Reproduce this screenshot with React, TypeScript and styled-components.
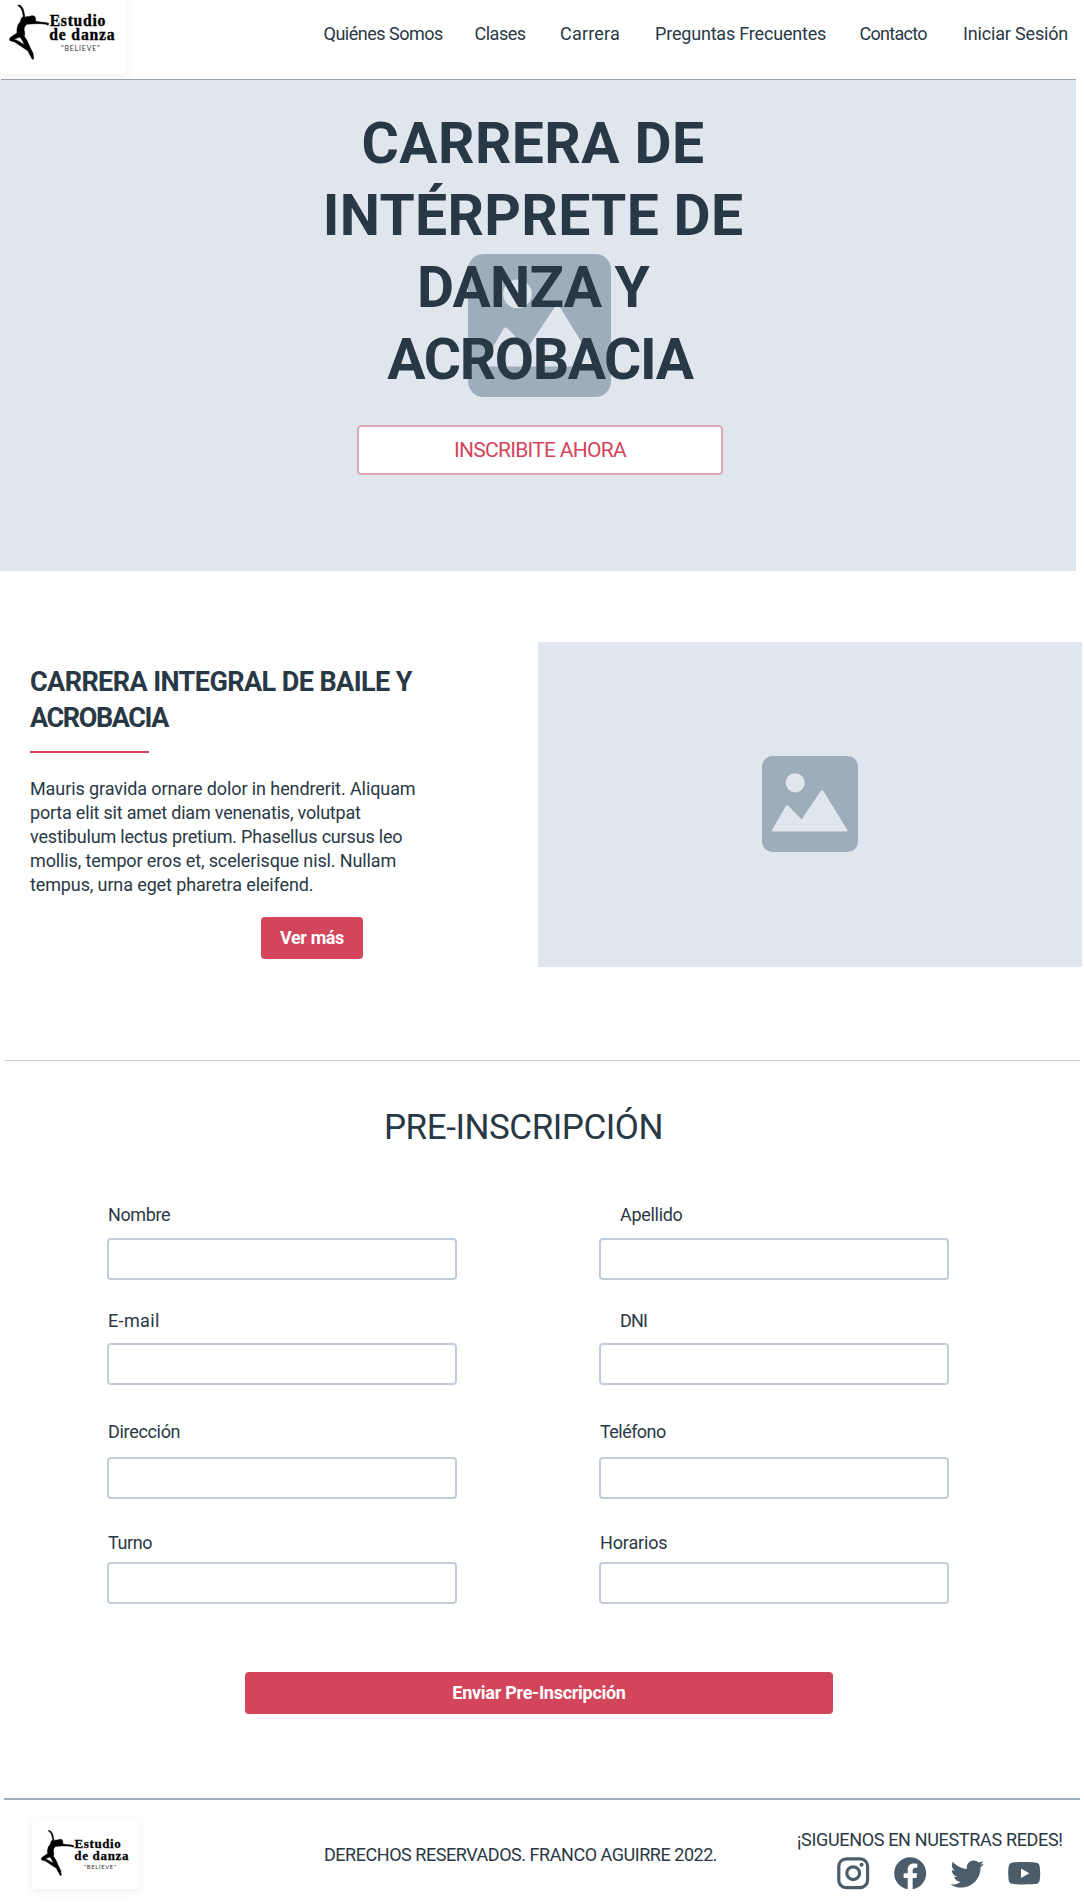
import React from "react";
import styled, { createGlobalStyle } from "styled-components";

const ink = "#293845";
const accent = "#d3455b";
const panel = "#dfe6ee";
const muted = "#9eadba";
const sans = `Roboto, "Open Sans", sans-serif`;

const GlobalStyle = createGlobalStyle`
  *, *::before, *::after { box-sizing: border-box; }
  body { margin: 0; background: #fff; color: ${ink}; font: 400 18px/24px ${sans}; }
  h1, h2, p { margin: 0; }
`;

const Page = styled.div`
  display: flex;
  flex-direction: column;
  width: 1084px;
  height: 1902px;
  overflow: hidden;
`;

/* A run of text with its own tracking */
const Run = styled.span<{ $track?: number }>`
  letter-spacing: ${(p) => p.$track ?? 0}px;
  white-space: nowrap;
`;

const Line = styled(Run)<{ $shift?: number }>`
  display: block;
  padding-left: ${(p) => p.$shift ?? 0}px;
`;

const Header = styled.header`
  display: flex;
  align-items: flex-start;
  height: 79px;
`;

const LogoCard = styled.div<{ $w: number; $h: number }>`
  flex: none;
  width: ${(p) => p.$w}px;
  height: ${(p) => p.$h}px;
  border-radius: 3px;
  background: #fff;
  box-shadow: 0 3px 10px rgba(0, 0, 0, 0.07);

  svg { display: block; width: 100%; height: 100%; }
`;

const Nav = styled.nav`
  display: grid;
  grid-template-columns: 151px 85.5px 95px 204.5px 103.5px auto;
  padding: 22px 0 0 197.5px;
`;

const NavLink = styled.a<{ $track: number }>`
  color: ${ink};
  letter-spacing: ${(p) => p.$track}px;
  white-space: nowrap;
`;

const Rule = styled.hr<{ $color: string; $thick: number; $top?: number; $left?: number; $w: number }>`
  flex: none;
  width: ${(p) => p.$w}px;
  height: ${(p) => p.$thick}px;
  margin: ${(p) => p.$top ?? 0}px 0 0 ${(p) => p.$left ?? 0}px;
  border: 0;
  background: ${(p) => p.$color};
`;

const Hero = styled.section`
  position: relative;
  flex: none;
  display: flex;
  flex-direction: column;
  align-items: center;
  width: 1076px;
  height: 491px;
  padding-top: 28px;
  background: ${panel};
`;

const HeroBackdrop = styled.div`
  position: absolute;
  inset: 0 0 0 3px;
  display: flex;
  align-items: center;
  justify-content: center;
`;

const HeroTitle = styled.h1`
  position: relative;
  margin-right: 10px;
  font-size: 57px;
  font-weight: 700;
  line-height: 72px;
  text-align: center;
`;

const HeroButton = styled.button`
  position: relative;
  width: 366px;
  height: 50px;
  margin: 29px 0 0 4px;
  padding: 0;
  border: 2px solid #dda9b6;
  border-radius: 4px;
  background: #fff;
  color: ${accent};
  font: 400 21px/24px ${sans};
`;

const Feature = styled.section`
  flex: none;
  display: grid;
  grid-template-columns: 538px 544px;
  padding-top: 71px;
`;

const Copy = styled.div`
  display: flex;
  flex-direction: column;
  align-items: flex-start;
  padding: 22px 0 0 30px;
`;

const CopyTitle = styled.h2`
  font-size: 27px;
  line-height: 36px;
`;

const CopyText = styled.p`
  margin-top: 24px;
`;

const SolidButton = styled.button<{ $w: number; $margin: string }>`
  flex: none;
  width: ${(p) => p.$w}px;
  height: 42px;
  margin: ${(p) => p.$margin};
  padding: 0;
  border: 0;
  border-radius: 4px;
  background: ${accent};
  color: #fff;
  font: 700 18px/24px ${sans};
`;

const Picture = styled.div`
  display: flex;
  align-items: center;
  justify-content: center;
  height: 325px;
  padding-bottom: 1px;
  background: ${panel};
`;

const FormTitle = styled.h2`
  margin: 46px 37px 0 0;
  font-size: 35px;
  font-weight: 400;
  line-height: 42px;
  text-align: center;
`;

const Form = styled.form`
  display: flex;
  flex-direction: column;
  margin-top: 54px;
`;

const FieldRow = styled.div<{ $top: number }>`
  display: grid;
  grid-template-columns: 350px 350px;
  column-gap: 142px;
  margin: ${(p) => p.$top}px 0 0 107px;
`;

const Field = styled.label<{ $gap: number }>`
  display: flex;
  flex-direction: column;
  gap: ${(p) => p.$gap}px;
`;

const Input = styled.input`
  width: 350px;
  height: 42px;
  border: 2px solid #c3cdd9;
  border-radius: 4px;
  background: #fff;
  outline: none;
`;

const Footer = styled.footer`
  display: grid;
  grid-template-columns: 292px 473px auto;
  align-items: start;
  padding: 18px 0 0 32px;
`;

const Copyright = styled.p`
  padding-top: 25px;
`;

const Social = styled.div`
  padding-top: 10px;
`;

const SocialIcons = styled.div`
  display: flex;
  gap: 18.6px;
  padding: 2px 0 0 37px;
`;

const SocialIcon = styled.svg`
  display: block;
  width: 38.4px;
  height: 38.4px;
  fill: #4b5c6b;
`;

const Logo = ({ viewBox }: { viewBox: string }) => (
  <svg viewBox={viewBox} preserveAspectRatio="none">
    <path
      fillRule="evenodd"
      stroke="#000"
      strokeWidth="1.6"
      strokeLinejoin="round"
      d="M53 16 L60 15 L64 19 Q71 26 72 37 L75 52 Q80 49 86 50 Q94 46 103 48 Q108 52 107 64 L120 66 L140 68 L147 71 L144 76 L139 73 L122 71 L104 71 L80 73 Q73 79 72 88 L74 99 L73 109 Q83 122 90 142 L99 160 L101 177 L97 178 L83 152 L62 138 L44 126 L30 122 Q26 117 33 111 L51 99 L51 86 Q53 72 61 65 L64 55 L70 49 L67 35 Q64 24 58 20 Z M60 111 L42 118 L53 122 L73 134 Q68 121 60 111 Z"
    />
    <g fontFamily='"Liberation Serif", serif' fontWeight="700" fontSize="47" stroke="#000" strokeWidth="1">
      <text x="149" y="77" textLength="167">Estudio</text>
      <text x="148" y="121" textLength="196">de danza</text>
    </g>
    <text x="183" y="153" textLength="116" fontFamily="Lato, sans-serif" fontSize="21" fill="#333">
      "BELIEVE"
    </text>
  </svg>
);

const ImageGlyph = ({ size }: { size: number }) => (
  <svg width={size} height={size} viewBox="0 0 96 96">
    <rect width="96" height="96" rx="10.5" fill={muted} />
    <g fill={panel}>
      <circle cx="33.2" cy="26.8" r="9.6" />
      <path d="M11 75.6 Q9.6 75.4 10.2 73.8 L23.8 50.3 Q25.2 48.4 26.8 50.2 L39.6 63.6 L58.5 35.2 Q60 33.4 61.5 35.2 L85.2 73.8 Q86 75.4 84.6 75.6 Z" />
    </g>
  </svg>
);

const nav: [string, number][] = [
  ["Quiénes Somos", -0.5],
  ["Clases", -0.5],
  ["Carrera", 0.2],
  ["Preguntas Frecuentes", -0.19],
  ["Contacto", -0.7],
  ["Iniciar Sesión", -0.17],
];

const heroLines: [string, number, number][] = [
  ["CARRERA DE", 0.4, 0],
  ["INTÉRPRETE DE", 0.32, 0],
  ["DANZA Y", -0.8, 0],
  ["ACROBACIA", -1.4, 14],
];

const paragraph: [string, number][] = [
  ["Mauris gravida ornare dolor in hendrerit. Aliquam", -0.09],
  ["porta elit sit amet diam venenatis, volutpat", -0.2],
  ["vestibulum lectus pretium. Phasellus cursus leo", -0.18],
  ["mollis, tempor eros et, scelerisque nisl. Nullam", -0.12],
  ["tempus, urna eget pharetra eleifend.", -0.12],
];

type FieldSpec = { label: string; track: number; indent: number };
const rows: { top: number; gap: number; fields: FieldSpec[] }[] = [
  { top: 0, gap: 11, fields: [{ label: "Nombre", track: -0.39, indent: 1 }, { label: "Apellido", track: -0.3, indent: 21 }] },
  { top: 29, gap: 10, fields: [{ label: "E-mail", track: 0.35, indent: 1 }, { label: "DNI", track: -0.8, indent: 21 }] },
  { top: 35, gap: 13, fields: [{ label: "Dirección", track: -0.32, indent: 1 }, { label: "Teléfono", track: -0.55, indent: 1 }] },
  { top: 32, gap: 7, fields: [{ label: "Turno", track: -0.4, indent: 1 }, { label: "Horarios", track: -0.15, indent: 1 }] },
];

const socials: [string, string][] = [
  ["Instagram", "M7.8,2H16.2C19.4,2 22,4.6 22,7.8V16.2A5.8,5.8 0 0,1 16.2,22H7.8C4.6,22 2,19.4 2,16.2V7.8A5.8,5.8 0 0,1 7.8,2M7.6,4A3.6,3.6 0 0,0 4,7.6V16.4C4,18.39 5.61,20 7.6,20H16.4A3.6,3.6 0 0,0 20,16.4V7.6C20,5.61 18.39,4 16.4,4H7.6M17.25,5.5A1.25,1.25 0 0,1 18.5,6.75A1.25,1.25 0 0,1 17.25,8A1.25,1.25 0 0,1 16,6.75A1.25,1.25 0 0,1 17.25,5.5M12,7A5,5 0 0,1 17,12A5,5 0 0,1 12,17A5,5 0 0,1 7,12A5,5 0 0,1 12,7M12,9A3,3 0 0,0 9,12A3,3 0 0,0 12,15A3,3 0 0,0 15,12A3,3 0 0,0 12,9Z"],
  ["Facebook", "M12 2.04C6.5 2.04 2 6.53 2 12.06C2 17.06 5.66 21.21 10.44 21.96V14.96H7.9V12.06H10.44V9.85C10.44 7.34 11.93 5.96 14.22 5.96C15.31 5.96 16.45 6.15 16.45 6.15V8.62H15.19C13.95 8.62 13.56 9.39 13.56 10.18V12.06H16.34L15.89 14.96H13.56V21.96A10 10 0 0 0 22 12.06C22 6.53 17.5 2.04 12 2.04Z"],
  ["Twitter", "M22.46,6C21.69,6.35 20.86,6.58 20,6.69C20.88,6.16 21.56,5.32 21.88,4.31C21.05,4.81 20.13,5.16 19.16,5.36C18.37,4.5 17.26,4 16,4C13.65,4 11.73,5.92 11.73,8.29C11.73,8.63 11.77,8.96 11.84,9.27C8.28,9.09 5.11,7.38 3,4.79C2.63,5.42 2.42,6.16 2.42,6.94C2.42,8.43 3.17,9.75 4.33,10.5C3.62,10.5 2.96,10.3 2.38,10V10.03C2.38,12.11 3.86,13.85 5.82,14.24C5.46,14.34 5.08,14.39 4.69,14.39C4.42,14.39 4.15,14.36 3.89,14.31C4.43,16 6,17.26 7.89,17.29C6.43,18.45 4.58,19.13 2.56,19.13C2.22,19.13 1.88,19.11 1.54,19.07C3.44,20.29 5.7,21 8.12,21C16,21 20.33,14.46 20.33,8.79C20.33,8.6 20.33,8.42 20.32,8.23C21.16,7.63 21.88,6.87 22.46,6Z"],
  ["YouTube", "M10,15L15.19,12L10,9V15M21.56,7.17C21.69,7.64 21.78,8.27 21.84,9.07C21.91,9.87 21.94,10.56 21.94,11.16L22,12C22,14.19 21.84,15.8 21.56,16.83C21.31,17.73 20.73,18.31 19.83,18.56C19.36,18.69 18.5,18.78 17.18,18.84C15.88,18.91 14.69,18.94 13.59,18.94L12,19C7.81,19 5.2,18.84 4.17,18.56C3.27,18.31 2.69,17.73 2.44,16.83C2.31,16.36 2.22,15.73 2.16,14.93C2.09,14.13 2.06,13.44 2.06,12.84L2,12C2,9.81 2.16,8.2 2.44,7.17C2.69,6.27 3.27,5.69 4.17,5.44C4.64,5.31 5.5,5.22 6.82,5.16C8.12,5.09 9.31,5.06 10.41,5.06L12,5C16.19,5 18.8,5.16 19.83,5.44C20.73,5.69 21.31,6.27 21.56,7.17Z"],
];

export default function App() {
  return (
    <>
      <GlobalStyle />
      <Page>
        <Header>
          <LogoCard $w={126} $h={74}>
            <Logo viewBox="0 0 378 222" />
          </LogoCard>
          <Nav>
            {nav.map(([text, track]) => (
              <NavLink key={text} $track={track}>{text}</NavLink>
            ))}
          </Nav>
        </Header>
        <Rule $color="#98a5b1" $thick={1} $left={1} $w={1075} />

        <Hero>
          <HeroBackdrop>
            <ImageGlyph size={143} />
          </HeroBackdrop>
          <HeroTitle>
            {heroLines.map(([text, track, shift]) => (
              <Line key={text} $track={track} $shift={shift}>{text}</Line>
            ))}
          </HeroTitle>
          <HeroButton>
            <Run $track={-0.7}>INSCRIBITE AHORA</Run>
          </HeroButton>
        </Hero>

        <Feature>
          <Copy>
            <CopyTitle>
              <Line $track={-0.57}>CARRERA INTEGRAL DE BAILE Y</Line>
              <Line $track={-1.4}>ACROBACIA</Line>
            </CopyTitle>
            <Rule $color={accent} $thick={2} $top={15} $w={119} />
            <CopyText>
              {paragraph.map(([text, track]) => (
                <Line key={text} $track={track}>{text}</Line>
              ))}
            </CopyText>
            <SolidButton $w={102} $margin="20px 0 0 231px">
              <Run $track={-0.4}>Ver más</Run>
            </SolidButton>
          </Copy>
          <Picture>
            <ImageGlyph size={96} />
          </Picture>
        </Feature>

        <Rule $color="#c0cfda" $thick={1} $top={93} $left={4} $w={1076} />

        <FormTitle>
          <Run $track={-0.45}>PRE-INSCRIPCIÓN</Run>
        </FormTitle>
        <Form>
          {rows.map((row) => (
            <FieldRow key={row.fields[0].label} $top={row.top}>
              {row.fields.map((f) => (
                <Field key={f.label} $gap={row.gap}>
                  <Line $track={f.track} $shift={f.indent}>{f.label}</Line>
                  <Input />
                </Field>
              ))}
            </FieldRow>
          ))}
          <SolidButton type="button" $w={588} $margin="68px 0 0 245px">
            <Run $track={-0.28}>Enviar Pre-Inscripción</Run>
          </SolidButton>
        </Form>

        <Rule $color={muted} $thick={2} $top={84} $left={4} $w={1076} />
        <Footer>
          <LogoCard $w={107} $h={71}>
            <Logo viewBox="-5 -30 387 257" />
          </LogoCard>
          <Copyright>
            <Run $track={-0.46}>DERECHOS RESERVADOS. FRANCO AGUIRRE 2022.</Run>
          </Copyright>
          <Social>
            <Line $track={-0.33}>¡SIGUENOS EN NUESTRAS REDES!</Line>
            <SocialIcons>
              {socials.map(([name, d]) => (
                <SocialIcon key={name} viewBox="0 0 24 24" aria-label={name}>
                  <path d={d} />
                </SocialIcon>
              ))}
            </SocialIcons>
          </Social>
        </Footer>
      </Page>
    </>
  );
}
